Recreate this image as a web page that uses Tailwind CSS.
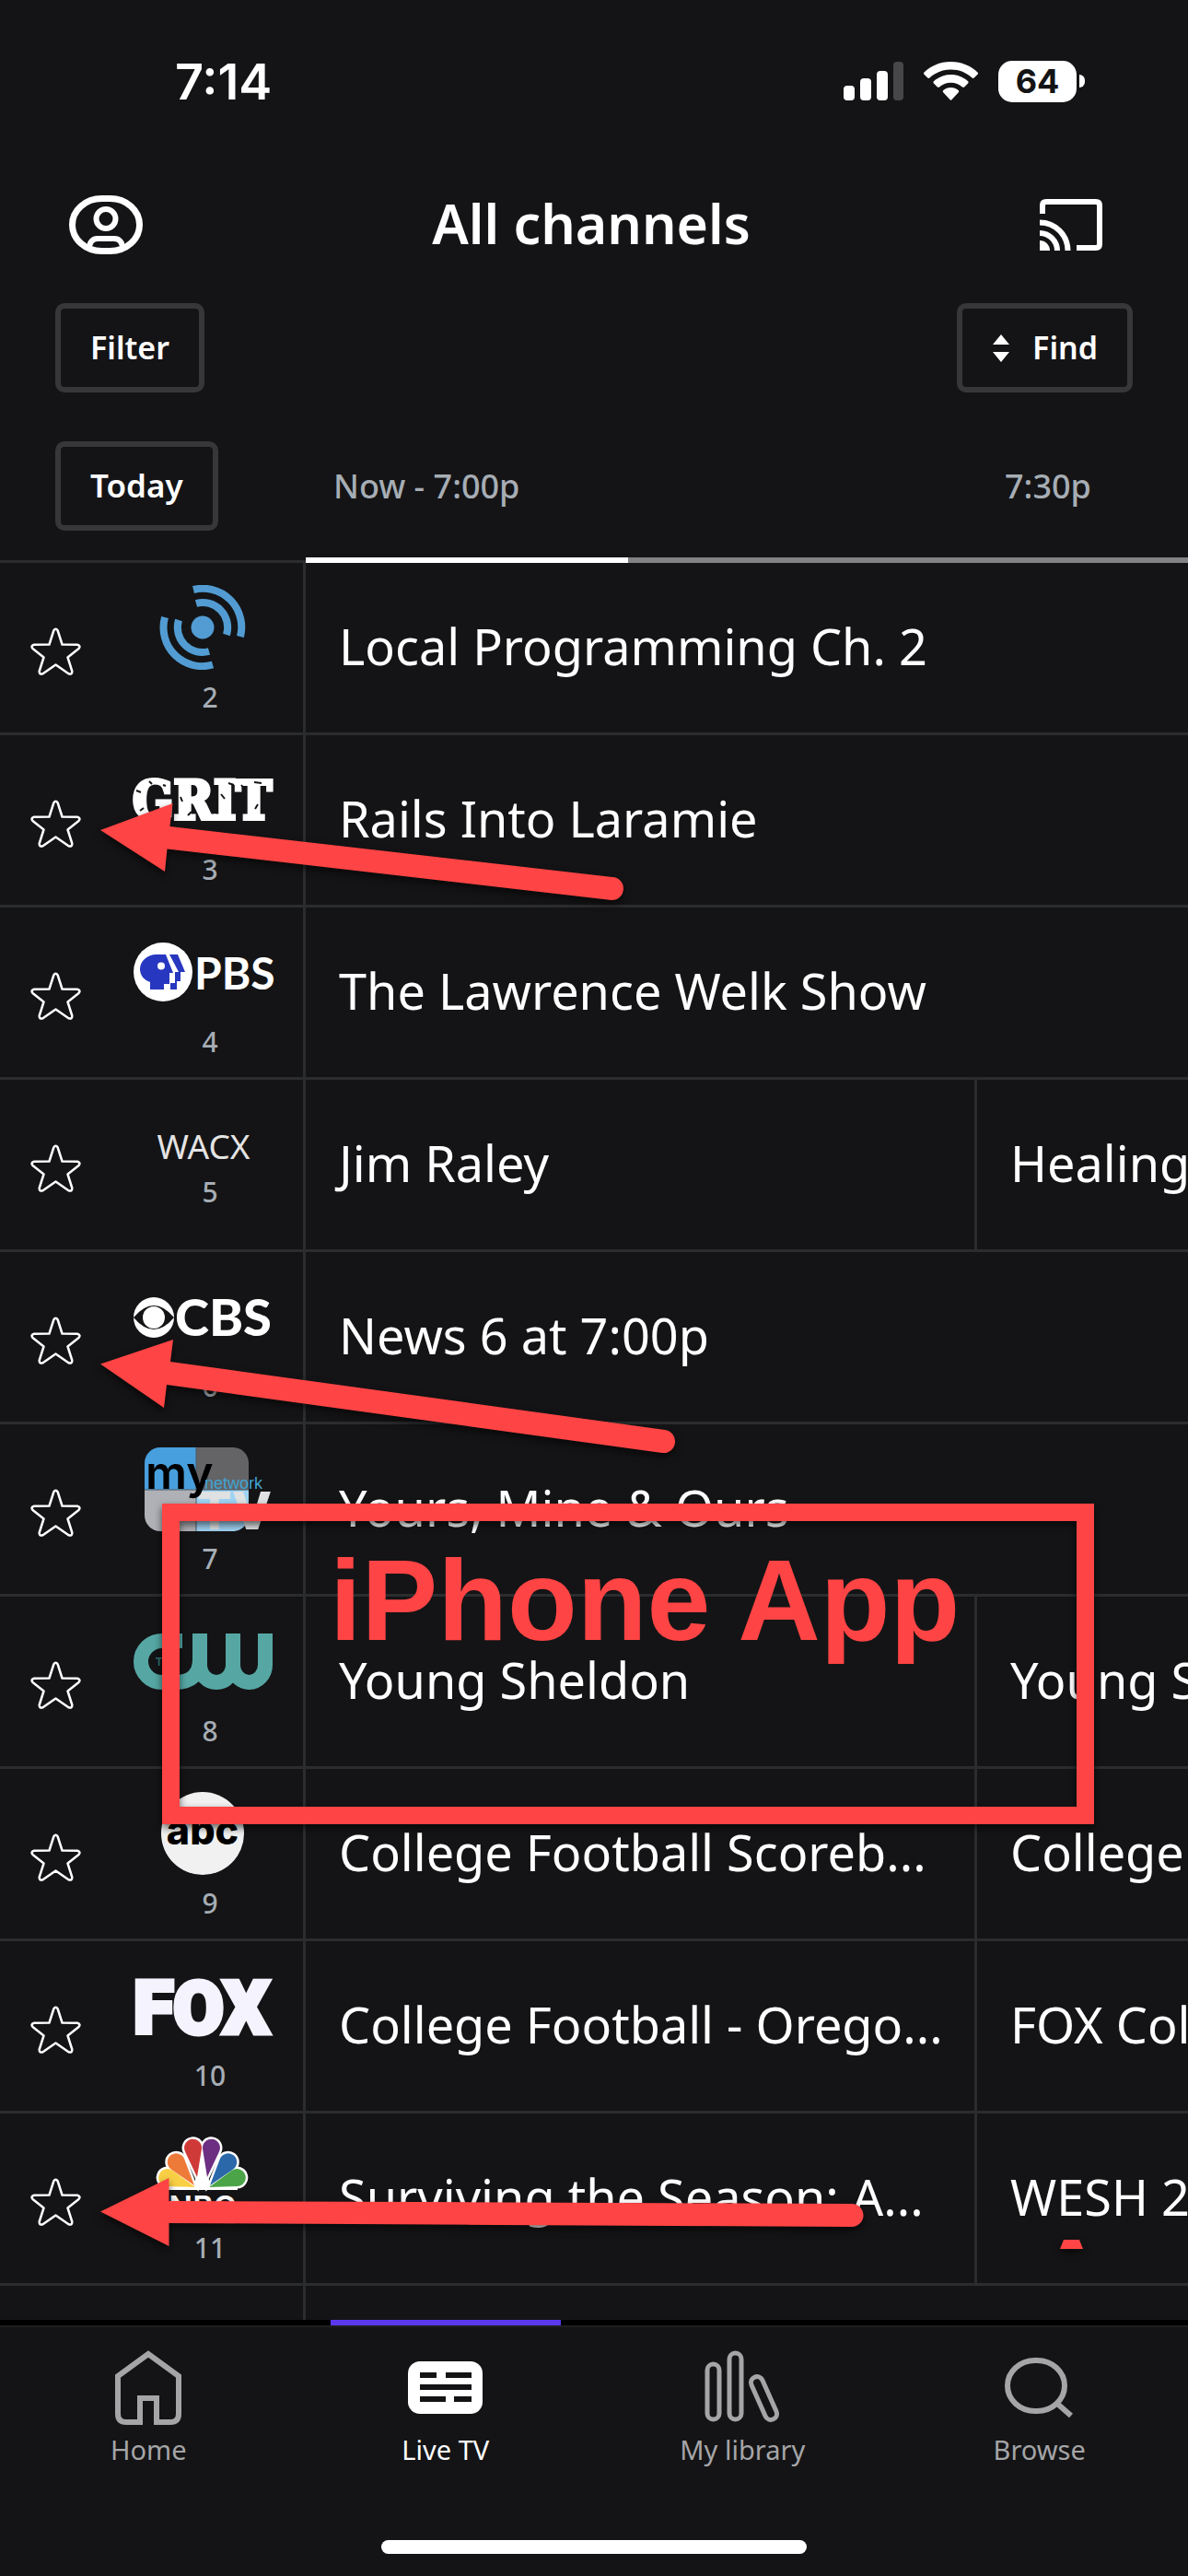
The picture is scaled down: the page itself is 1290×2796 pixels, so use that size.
<!DOCTYPE html>
<html lang="en">
<head>
    <meta charset="UTF-8">
    <meta name="viewport" content="width=device-width, initial-scale=1.0">
    <script src="https://cdn.jsdelivr.net/npm/@tailwindcss/browser@4"></script>
    <title>All channels</title>
</head>
<body class="relative flex min-h-screen flex-col overflow-x-hidden bg-[#141416] font-['Noto_Sans',sans-serif] text-white">

    <!-- Status bar -->
    <div class="flex h-[176px] items-center justify-between pl-[190px] pr-28">
        <span class="font-['Inter',sans-serif] text-[54px] font-semibold">7:14</span>
        <div class="flex items-center gap-[22px]">
            <svg class="h-[42px] w-[65px]" viewBox="0 0 65 42" fill="#fff">
                <rect x="0" y="26" width="12" height="16" rx="4"/>
                <rect x="18" y="18" width="12" height="24" rx="4"/>
                <rect x="36" y="10" width="12" height="32" rx="4"/>
                <rect x="54" y="0" width="11" height="42" rx="4" fill="#47474a"/>
            </svg>
            <svg class="h-[42px] w-[59px]" viewBox="0 0 59 42" fill="#fff">
                <path d="M29.5 0C41 0 51.5 4.5 58.5 11.5c.7.7.7 1.5 0 2.2l-3.8 3.9c-.6.6-1.5.6-2.1 0C46.5 11.9 38.5 8.6 29.5 8.6S12.5 11.9 6.4 17.6c-.6.6-1.5.6-2.1 0L.5 13.7c-.7-.7-.7-1.5 0-2.2C7.5 4.5 18 0 29.5 0z"/>
                <path d="M29.5 14c7.2 0 13.7 2.7 18.6 7.2.7.6.7 1.5 0 2.2l-4 4c-.6.6-1.4.6-2.1.1-3.4-3-7.7-4.8-12.5-4.8s-9.1 1.8-12.5 4.8c-.7.5-1.5.5-2.1-.1l-4-4c-.7-.7-.7-1.6 0-2.2C15.8 16.7 22.3 14 29.5 14z"/>
                <path d="M29.5 28c3.2 0 6 1.1 8.2 3 .7.6.7 1.5.1 2.2l-7.2 7.9c-.6.7-1.6.7-2.2 0l-7.2-7.9c-.6-.7-.6-1.6.1-2.2 2.2-1.9 5-3 8.2-3z"/>
            </svg>
            <div class="flex items-center gap-[3px]">
                <span class="flex h-[45px] w-[85px] items-center justify-center rounded-[15px] bg-white font-['Inter',sans-serif] text-[36px] font-bold text-[#141416]">64</span>
                <span class="h-[14px] w-[6px] rounded-r-full bg-white"></span>
            </div>
        </div>
    </div>

    <!-- Title bar -->
    <header class="flex h-[136px] items-center justify-between pl-[75px] pr-[93px]">
        <button type="button" aria-label="Account">
            <svg class="h-16 w-20" viewBox="0 0 80 64" fill="none" stroke="#fff" stroke-width="6">
                <rect x="3.5" y="3.5" width="73" height="57" rx="32" ry="28.5" stroke-width="7"/>
                <circle cx="40" cy="25.5" r="10.5"/>
                <path d="M22 58c0-8 4-11 9-11h18c5 0 9 3 9 11"/>
            </svg>
        </button>
        <h1 class="pb-1 text-[59px] font-semibold leading-none">All channels</h1>
        <button type="button" aria-label="Cast">
            <svg class="h-14 w-[68px]" viewBox="0 0 68 56" fill="none" stroke="#fff" stroke-width="6">
                <path d="M3 16V7q0-4 4-4h54q4 0 4 4v42q0 4-4 4H40"/>
                <path d="M0 25.5A30.5 30.5 0 0 1 30.5 56M0 37a19 19 0 0 1 19 19"/>
                <path d="M0 45a11 11 0 0 1 11 11H0z" fill="#fff" stroke="none"/>
            </svg>
        </button>
    </header>

    <div class="flex justify-between px-[60px] pt-[17px]">
        <button type="button" class="h-[97px] rounded-[10px] border-6 border-[#373739] px-8 text-[34px] font-semibold">Filter</button>
        <button type="button" class="flex h-[97px] items-center gap-6 rounded-[10px] border-6 border-[#373739] px-8 text-[34px] font-semibold">
            <svg class="h-[30px] w-5" viewBox="0 0 20 30" fill="#fff"><path d="M10 0l9 11H1zM10 30l9-11H1z"/></svg>
            Find
        </button>
    </div>

    <!-- Guide -->
    <table class="w-full table-fixed border-separate border-spacing-0">
        <colgroup>
            <col class="w-[332px]">
            <col class="w-[729px]">
            <col>
        </colgroup>
        <thead>
            <tr class="text-left text-4xl text-[#a6adb4]">
                <th class="pb-[29px] pl-[60px] pt-[53px]">
                    <button type="button" class="block h-[97px] rounded-[10px] border-6 border-[#373739] px-8 text-[35px] font-semibold text-white">Today</button>
                </th>
                <th class="pb-[29px] pl-[30px] pt-[53px] font-medium">Now - 7:00p</th>
                <th class="pb-[29px] pl-[30px] pt-[53px] font-medium">7:30p</th>
            </tr>
            <tr>
                <td class="border-b-3 border-[#2b2c2e]"></td>
                <td colspan="2" class="p-0">
                    <div class="flex h-1.5 bg-[#838385]"><div class="w-[350px] bg-white"></div></div>
                </td>
            </tr>
        </thead>
        <tbody id="guide"></tbody>
    </table>

    <!-- Tab bar -->
    <nav class="flex flex-1 flex-col justify-between pb-6">
        <ul class="grid grid-cols-4 text-[29px] leading-9 text-[#a5a5a7]">
            <li>
                <div class="h-1.5 bg-black"></div>
                <a href="#" class="flex flex-col items-center gap-2 border-t-2 border-[#1f1f21] pt-[25px]">
                    <svg class="h-[82px] w-[74px]" viewBox="0 0 74 82" fill="none" stroke="#a5a5a7" stroke-width="6">
                        <path d="M28 78H13q-9 0-9-9V28L37 4l33 24v41q0 9-9 9H46V52H28z"/>
                    </svg>
                    Home
                </a>
            </li>
            <li>
                <div class="flex h-1.5 justify-center bg-black"><span class="w-[250px] bg-[#5b38ec]"></span></div>
                <a href="#" aria-current="page" class="flex flex-col items-center gap-2 border-t-2 border-[#1f1f21] pt-[25px] text-white">
                    <svg class="h-[82px] w-[82px]" viewBox="0 0 82 82">
                        <rect x="0" y="12" width="81" height="57" rx="13" fill="#fff"/>
                        <path d="M13 24h18v6H13zM41 24h28v6H41zM13 37h56v6H13zM13 50h28v6H13zM50 50h19v6H50z" fill="#141416"/>
                    </svg>
                    Live TV
                </a>
            </li>
            <li>
                <div class="h-1.5 bg-black"></div>
                <a href="#" class="flex flex-col items-center gap-2 border-t-2 border-[#1f1f21] pt-[25px]">
                    <svg class="h-[82px] w-[82px]" viewBox="0 0 82 82" fill="none" stroke="#a5a5a7" stroke-width="5">
                        <rect x="3" y="15" width="13" height="60" rx="6.5"/>
                        <rect x="27" y="3" width="13" height="72" rx="6.5"/>
                        <rect x="58" y="27" width="13" height="50" rx="6.5" transform="rotate(-24 64.5 52)"/>
                    </svg>
                    My library
                </a>
            </li>
            <li>
                <div class="h-1.5 bg-black"></div>
                <a href="#" class="flex flex-col items-center gap-2 border-t-2 border-[#1f1f21] pt-[25px]">
                    <svg class="h-[82px] w-[76px]" viewBox="0 0 76 82" fill="none" stroke="#a5a5a7" stroke-width="6">
                        <rect x="3" y="11" width="62" height="55" rx="30" ry="27.5"/>
                        <path d="M56 57l16 14"/>
                    </svg>
                    Browse
                </a>
            </li>
        </ul>
        <div class="mx-auto h-[15px] w-[462px] rounded-full bg-white"></div>
    </nav>

    <!-- Callouts drawn over the guide -->
    <svg class="pointer-events-none absolute left-0 top-0 h-[2796px] w-[1290px] drop-shadow-[0_4px_4px_rgba(0,0,0,0.6)]" viewBox="0 0 1290 2796" fill="#fe4444">
        <path d="M109 901L187.5 872L184.5 897L665 952A12.5 12.5 0 0 1 664 977L181.5 921.5L179 946Z"/>
        <path d="M109 1480.5L188 1454L185 1478L722 1552A12.5 12.5 0 0 1 719 1577L181 1503L178 1528Z"/>
        <path d="M109 2400.5L183.5 2364V2389L925 2392A12.5 12.5 0 0 1 925 2417L183.5 2413V2438Z"/>
        <path d="M1155 2431h17l4 10h-25z"/>
        <rect x="185.5" y="1641.5" width="993" height="329" fill="none" stroke="#fe4444" stroke-width="19"/>
    </svg>
    <p class="pointer-events-none absolute left-[358px] top-[1669px] whitespace-nowrap font-['Liberation_Sans',sans-serif] text-[124px] font-bold leading-[136px] text-[#fe4444]">iPhone App</p>

    <script>
        const petal = 'M0 0L-9 -29A9.5 9.5 0 1 1 9 -29Z';
        // [x, y, angle, colour]
        const petals = [
            [68, 56, -71, '#f9cf45'],
            [67, 54, -38, '#ee7a3a'],
            [70, 45, -8, '#cf3a39'],
            [81, 45, 8, '#6d2f82'],
            [84, 54, 38, '#2b68a9'],
            [83, 56, 71, '#4ba548'],
        ];
        const drawPetals = (attrs) => petals.map(p =>
            `<path d="${petal}" transform="translate(${p[0]} ${p[1]}) rotate(${p[2]})" ${attrs(p)}/>`).join('');

        const logos = {
            local: `<g fill="none" stroke="#529cd3" stroke-width="8">
                    <path d="M66 5A42 42 0 0 1 117 56M35 35A42 42 0 0 0 87 86.5"/>
                    <path d="M69 20A27 27 0 0 1 102 54M50 38A27 27 0 0 0 83 72"/>
                </g><circle cx="76" cy="46" r="12.5" fill="#529cd3"/>`,
            grit: `<text x="0" y="67" font-family="DejaVu Serif Condensed, DejaVu Serif, serif" font-weight="700" font-size="58" fill="#fff" stroke="#fff" stroke-width="4">GRIT</text>
                <path d="M4 36l5 2M8 58l4-3M18 26l3 3M33 30l3 1M52 43l2 5M96 40l4 5M104 28l6 2M118 30l3 4M132 27l8 1M133 56l3-5M140 35l4 3M60 63l4-4" stroke="#141416" stroke-width="2"/>`,
            pbs: `<circle cx="33" cy="46" r="32" fill="#fff"/>
                <path d="M33 27H26C16 27 8 34 8 43c0 7 5 12 11 14v8h15v-6h6V47h4L36 27z" fill="#2837c0"/>
                <path d="M40 27h9l8 19h-5v10h-4v9h-7v-7h5V46h4z" fill="#2837c0"/>
                <circle cx="31" cy="39.5" r="4" fill="#fff"/>
                <text x="67" y="65" font-family="Lato, sans-serif" font-weight="700" font-size="48" fill="#fff">PBS</text>`,
            cbs: `<circle cx="23" cy="47" r="22" fill="#fff"/>
                <path d="M1 47Q12 34 23 34T45 47Q34 60 23 60T1 47z" fill="#141416"/>
                <circle cx="23" cy="47" r="12" fill="#fff"/>
                <text x="46" y="67" font-family="Lato, sans-serif" font-weight="900" font-size="56" fill="#fff">CBS</text>`,
            mytv: `<clipPath id="tile"><rect x="13" y="1" width="113" height="91" rx="17"/></clipPath>
                <g clip-path="url(#tile)">
                    <path d="M13 1h56v46H13z" fill="#489fdd"/><path d="M69 1h57v46H69z" fill="#646466"/>
                    <path d="M13 47h56v45H13z" fill="#b0b1b6"/><path d="M69 47h57v45H69z" fill="#9fd3f3"/>
                    <path d="M69 1v91M13 47h113" stroke="#4b5a66" stroke-width="1"/>
                </g>
                <text x="70" y="90" font-family="Inter, sans-serif" font-weight="800" font-size="56" fill="#dfe1e2">TV</text>
                <text x="14" y="46" font-family="Inter, sans-serif" font-weight="600" font-size="50" fill="#000">my</text>
                <text x="78" y="46" font-family="Liberation Sans, sans-serif" font-size="18" fill="#3fa4d4">network</text>`,
            cw: `<g fill="none" stroke="#56a7a4" stroke-width="16">
                    <path d="M54 24H32A23 22.5 0 0 0 32 69H46C64 69 73 60 73 44V16"/>
                    <path d="M73 16V50A18 19 0 0 0 109 50V16V50A17.5 19 0 0 0 144 50V16"/>
                </g>
                <text x="25" y="51" font-family="Liberation Sans, sans-serif" font-weight="700" font-size="12" fill="#2f6f6d">THE</text>`,
            abc: `<circle cx="76" cy="46" r="45" fill="#f1f1f1"/>
                <text x="76" y="58" text-anchor="middle" font-family="Inter, sans-serif" font-weight="800" font-size="43" fill="#000">abc</text>`,
            fox: `<text x="1" y="76" font-family="Roboto, sans-serif" font-weight="900" font-size="79" fill="#f5f3fd" stroke="#f5f3fd" stroke-width="5">FOX</text>`,
            nbc: `${drawPetals(() => 'fill="#fff" stroke="#fff" stroke-width="5"')}
                <path d="M75.5 22L86 59H65zM38 56h76v3H38z" fill="#fff"/>
                ${drawPetals(p => `fill="${p[3]}"`)}
                <text x="76" y="90" text-anchor="middle" font-family="Inter, sans-serif" font-weight="600" font-size="34" fill="#fff">NBC</text>`,
        };

        const channels = [
            { num: 2, name: 'Local', logo: 'local', shows: ['Local Programming Ch. 2'] },
            { num: 3, name: 'GRIT', logo: 'grit', shows: ['Rails Into Laramie'] },
            { num: 4, name: 'PBS', logo: 'pbs', shows: ['The Lawrence Welk Show'] },
            { num: 5, name: 'WACX', shows: ['Jim Raley', 'Healing'] },
            { num: 6, name: 'CBS', logo: 'cbs', shows: ['News 6 at 7:00p'] },
            { num: 7, name: 'MyNetworkTV', logo: 'mytv', shows: ['Yours, Mine &amp; Ours'] },
            { num: 8, name: 'The CW', logo: 'cw', shows: ['Young Sheldon', 'Young Sheldon'] },
            { num: 9, name: 'ABC', logo: 'abc', shows: ['College Football Scoreb...', 'College'] },
            { num: 10, name: 'FOX', logo: 'fox', shows: ['College Football - Orego...', 'FOX College'] },
            { num: 11, name: 'NBC', logo: 'nbc', shows: ['Surviving the Season: A...', 'WESH 2'] },
        ];

        const badge = (ch) => ch.logo
            ? `<svg class="h-[92px] w-[154px]" viewBox="0 0 154 92" role="img" aria-label="${ch.name}">${logos[ch.logo]}</svg>`
            : `<span class="flex h-[68px] w-[154px] items-end justify-center text-[37px] leading-10 text-[#e4e4e4]">${ch.name}</span>`;

        const cells = (shows) => shows.length === 1
            ? `<td colspan="2" class="overflow-hidden whitespace-nowrap border-b-3 border-[#2b2c2e] pb-1 pl-9">${shows[0]}</td>`
            : `<td class="overflow-hidden whitespace-nowrap border-b-3 border-r-3 border-[#2b2c2e] pb-1 pl-9">${shows[0]}</td>
               <td class="overflow-hidden whitespace-nowrap border-b-3 border-[#2b2c2e] pb-1 pl-9">${shows[1]}</td>`;

        document.getElementById('guide').innerHTML = channels.map(ch => `
            <tr class="text-[54px] leading-none">
                <th class="border-b-3 border-r-3 border-[#2b2c2e] p-0 font-normal">
                    <div class="flex h-[184px] items-start gap-14 pb-4 pl-8 pt-6">
                        <button type="button" aria-label="Favorite ${ch.name}" class="self-center">
                            <svg class="h-[52px] w-14" viewBox="0 0 56 52" fill="none" stroke="#fff" stroke-width="2.5" stroke-linejoin="round">
                                <path d="M26.3 3.5Q28.5 0 30.7 3.5L35.5 18.5L52 18.8Q56 20 53.5 23L41.5 32.5L46.3 47.5Q46.5 51.5 42.5 50.3L28.5 40.5L14.5 50.3Q10.5 51.5 10.7 47.5L15.5 32.5L3.5 23Q1 20 5 18.8L21.5 18.5Z"/>
                            </svg>
                        </button>
                        <div class="flex w-[168px] flex-col">
                            ${badge(ch)}
                            <span class="mt-3 text-center text-[30px] font-medium leading-9 text-[#a6adb4]">${ch.num}</span>
                        </div>
                    </div>
                </th>
                ${cells(ch.shows)}
            </tr>`).join('') + '<tr><td class="h-[37px] border-r-3 border-[#2b2c2e]"></td><td colspan="2"></td></tr>';
    </script>
</body>
</html>
